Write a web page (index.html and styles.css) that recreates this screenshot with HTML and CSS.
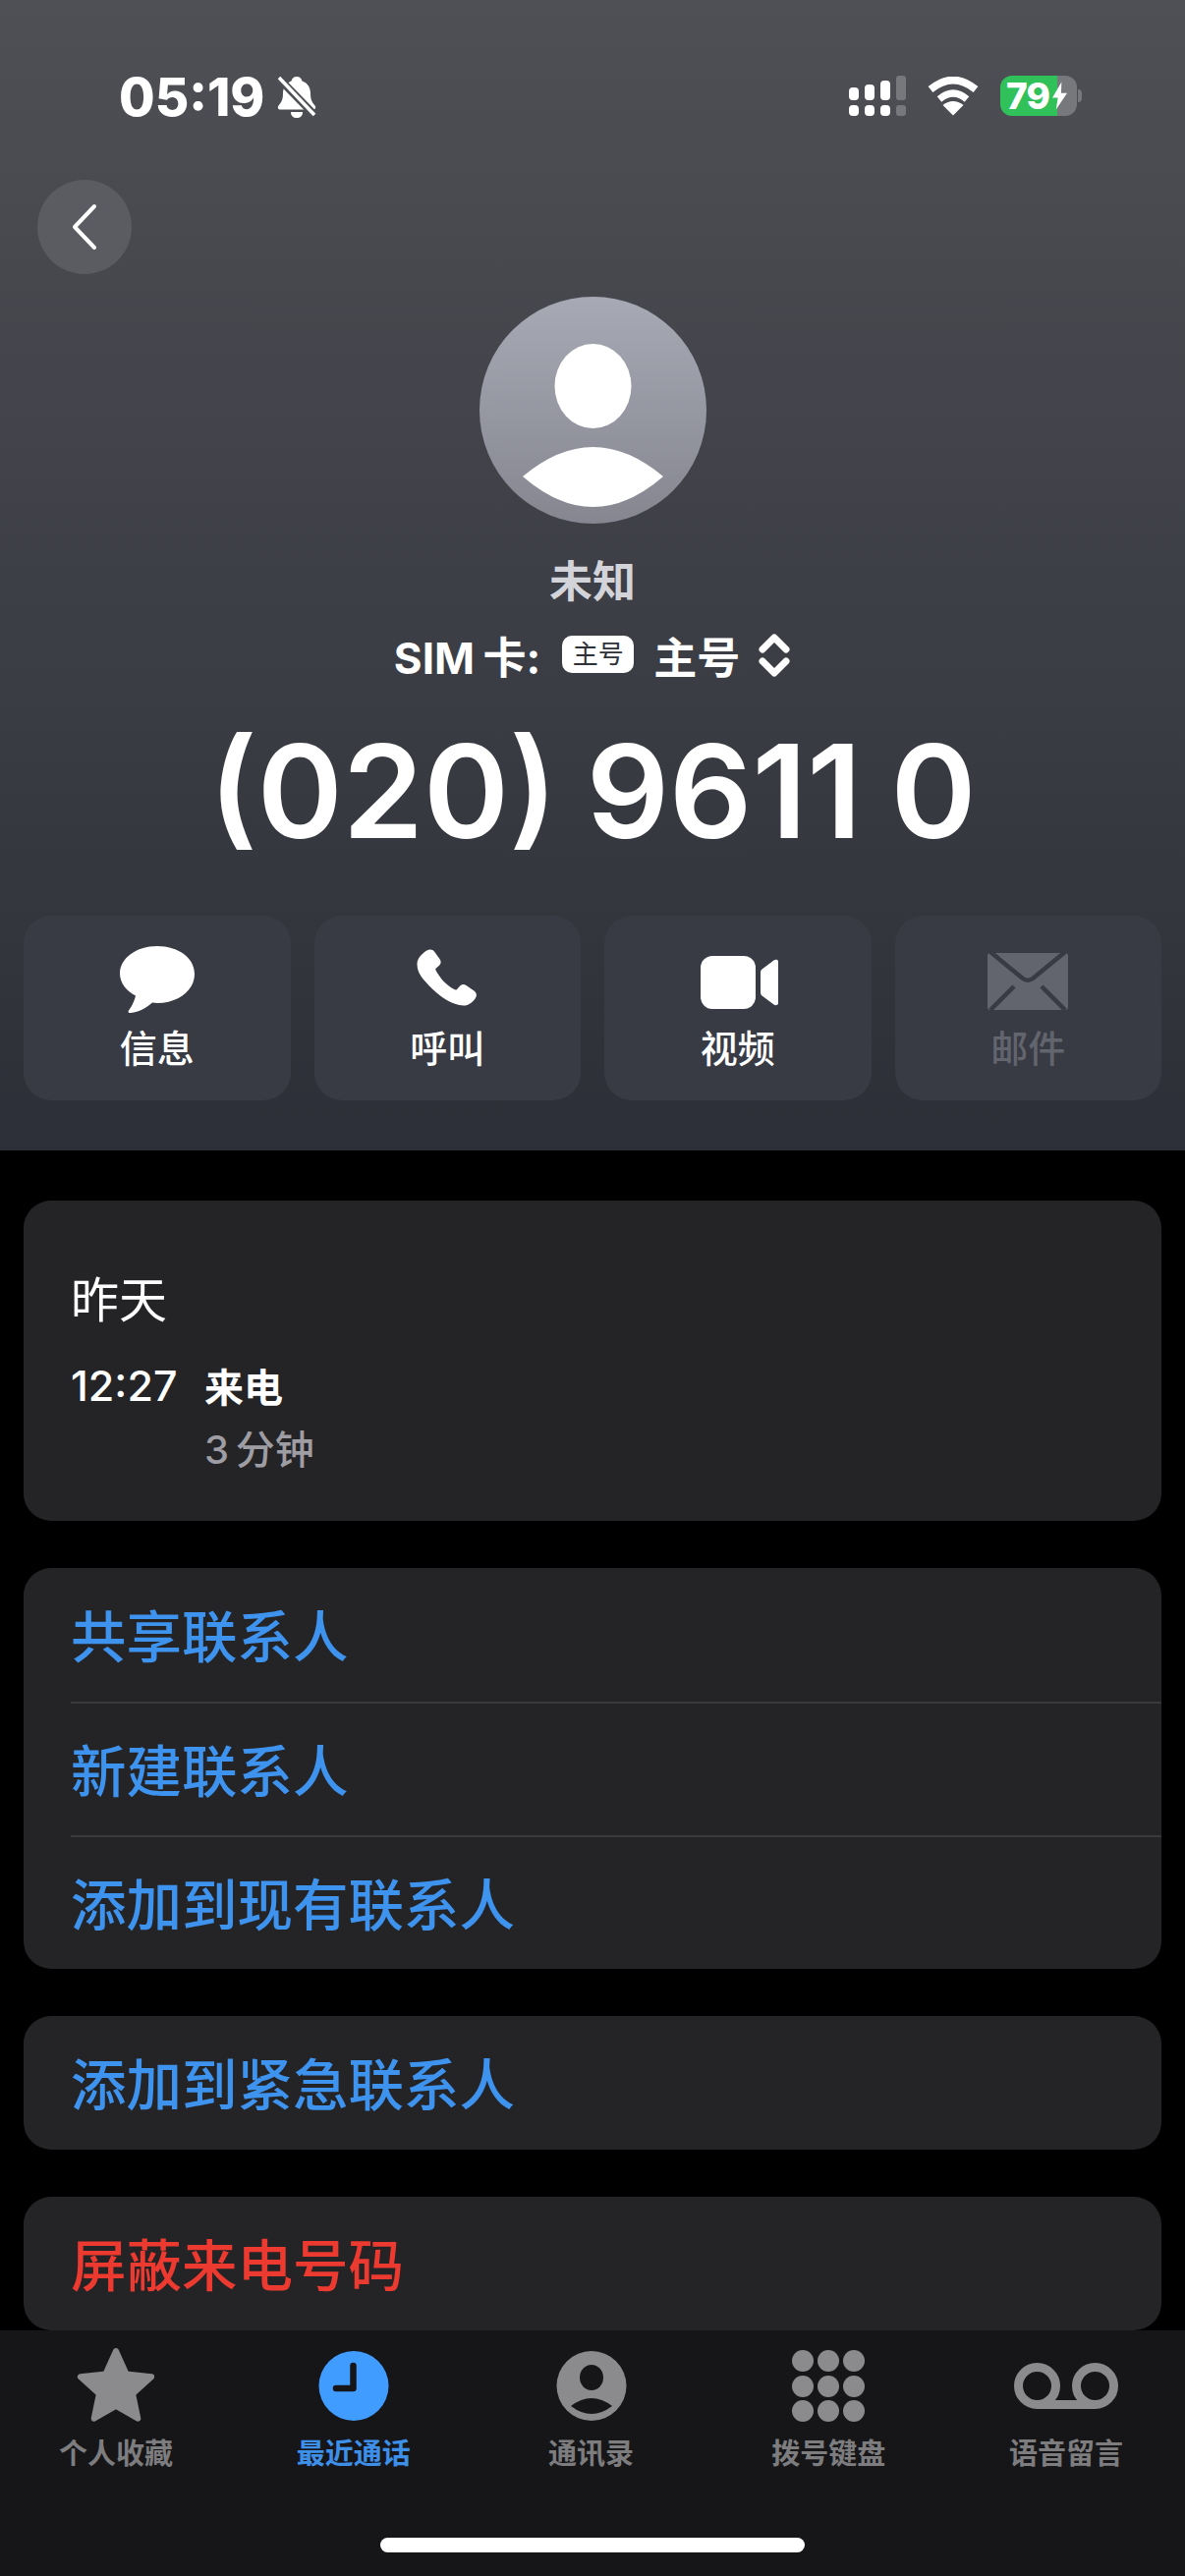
FILE: index.html
```html
<!DOCTYPE html>
<html lang="zh-CN">
<head>
    <meta charset="UTF-8">
    <meta name="viewport" content="width=device-width, initial-scale=1.0">
    <title>未知</title>
    <link rel="stylesheet" href="styles.css">
</head>
<body>
    <div class="phone">

        <!-- Contact header -->
        <header class="header">
            <div class="status-bar">
                <div class="status-left">
                    <span class="clock">05:19</span>
                    <svg class="bell" viewBox="0 0 42 44">
                        <path d="M21 1c3 0 5 2 5.500 4.500 6 2 8.500 7 8.500 13 0 6 2 9 4.500 12 1.500 2 .5 4-2 4H4.500c-2.500 0-3.500-2-2-4C5 27.500 7 24.500 7 18.500c0-6 2.500-11 8.500-13C16 3 18 1 21 1z" fill="#fff"/>
                        <path d="M15 37h12c0 4-2.500 6-6 6s-6-2-6-6z" fill="#fff"/>
                        <path d="M3 3l36 37" stroke="#4e4f54" stroke-width="8"/>
                        <path d="M3 2l36 38" stroke="#fff" stroke-width="3.500"/>
                    </svg>
                </div>
                <div class="status-right">
                    <svg class="signal" viewBox="0 0 58 41">
                        <rect x="0" y="12" width="10" height="13" rx="4" fill="#fff"/>
                        <rect x="16" y="9" width="10" height="16" rx="4" fill="#fff"/>
                        <rect x="32" y="5" width="10" height="20" rx="4" fill="#fff"/>
                        <rect x="48" y="0" width="10" height="25" rx="3" fill="#77787c"/>
                        <rect x="0" y="30" width="10" height="11" rx="4" fill="#fff"/>
                        <rect x="16" y="30" width="10" height="11" rx="4" fill="#fff"/>
                        <rect x="32" y="30" width="10" height="11" rx="4" fill="#fff"/>
                        <rect x="48" y="30" width="10" height="11" rx="3" fill="#77787c"/>
                    </svg>
                    <svg class="wifi" viewBox="0 0 52 40">
                        <path d="M3 13Q26 -6 49 13" fill="none" stroke="#fff" stroke-width="7.500"/>
                        <path d="M12 23Q26 11 40 23" fill="none" stroke="#fff" stroke-width="7"/>
                        <path d="M26 39.500L15.500 29Q26 21 36.500 29z" fill="#fff"/>
                    </svg>
                    <div class="battery">
                        <span class="battery-level">79</span>
                        <svg class="bolt" viewBox="0 0 16 30">
                            <path d="M10 0L0 17h6L4 30 16 12H9.500z" fill="#fff"/>
                        </svg>
                    </div>
                </div>
            </div>

            <div class="top-row">
                <button class="back-button">
                    <svg viewBox="0 0 30 48" class="back-icon">
                        <path d="M25 3L5 24l20 21" fill="none" stroke="#fff" stroke-width="4" stroke-linecap="round" stroke-linejoin="round"/>
                    </svg>
                </button>
                <svg class="avatar" viewBox="0 0 231 231">
                    <defs>
                        <linearGradient id="avatar-bg" x1="0" y1="0" x2="0" y2="1">
                            <stop offset="0" stop-color="#a7a9b4"/>
                            <stop offset="1" stop-color="#858690"/>
                        </linearGradient>
                    </defs>
                    <circle cx="115.500" cy="115.500" r="115.500" fill="url(#avatar-bg)"/>
                    <ellipse cx="115.500" cy="91" rx="39" ry="43" fill="#fff"/>
                    <path d="M44 183Q115.500 123 187 183Q115.500 245 44 183z" fill="#fff"/>
                </svg>
            </div>

            <div class="contact-name">未知</div>

            <div class="sim-row">
                <span class="sim-label">SIM 卡:</span>
                <span class="sim-badge">主号</span>
                <span class="sim-value">主号</span>
                <svg class="sim-arrows" viewBox="0 0 34 46">
                    <path d="M5 17L17 5l12 12M5 29l12 12 12-12" fill="none" stroke="#fff" stroke-width="7" stroke-linecap="round" stroke-linejoin="round"/>
                </svg>
            </div>

            <div class="phone-number">(020) 9611 0</div>

            <div class="actions">
                <div class="action">
                    <svg class="action-icon" viewBox="0 0 82 72">
                        <path d="M41 1C19.500 1 3 13.500 3 29c0 9.500 6.500 17.500 16 22.500-1 5-4 11-7 15-1 1.500 0 3 2 2.500 8.500-1 16-5 22-10.500 1.500.2 3.500.5 5 .5 21.500 0 38-13 38-29.500S62.500 1 41 1z" fill="#fff"/>
                    </svg>
                    <span class="action-label">信息</span>
                </div>
                <div class="action">
                    <svg class="action-icon" viewBox="0 0 82 72">
                        <path transform="translate(0 -1) scale(1.050)" d="M19 6.500c3-2 6-1.500 8 1l5 7c1.500 2.200 1.200 4.500-.6 6.200l-3 2.600c-.6.600-.7 1.300-.3 2 2 3.800 4.500 7.500 7.700 10.800 3.400 3.400 7 6 10.800 8 .8.400 1.400.3 2-.3l2.800-3c1.800-1.900 4-2.200 6.200-.7l7.600 5.200c2.600 1.800 3 4.600 1.200 7.200-2.600 3.600-6.300 7-11.500 7-8 0-20-6-30-16S10 28 10 19c0-5 5-10 9-12.500z" fill="#fff"/>
                    </svg>
                    <span class="action-label">呼叫</span>
                </div>
                <div class="action">
                    <svg class="action-icon" viewBox="0 0 82 72">
                        <rect x="3" y="11" width="56" height="54" rx="12" fill="#fff"/>
                        <path d="M64 28c0-1.500.5-2.500 1.500-3.500l12-9c2.500-1.500 5 -.5 5 3v39c0 3.500-2.500 4.500-5 3l-12-9c-1-1-1.500-2-1.500-3.500z" fill="#fff"/>
                    </svg>
                    <span class="action-label">视频</span>
                </div>
                <div class="action action-disabled">
                    <svg class="action-icon" viewBox="0 0 82 72">
                        <rect x="0" y="8" width="82" height="58" rx="3" fill="#63656e"/>
                        <path d="M3 7l33 27c3 2 7 2 10 0L79 7M3 66l24-24M79 66L55 42" fill="none" stroke="#383a44" stroke-width="4.500"/>
                    </svg>
                    <span class="action-label">邮件</span>
                </div>
            </div>
        </header>

        <!-- Details -->
        <main class="list">
            <section class="card card-call">
                <div class="call-day">昨天</div>
                <div class="call-row">
                    <div class="call-time">12:27</div>
                    <div>
                        <div class="call-type">来电</div>
                        <div class="call-length">3 分钟</div>
                    </div>
                </div>
            </section>

            <section class="card">
                <div class="row">共享联系人</div>
                <div class="row">新建联系人</div>
                <div class="row">添加到现有联系人</div>
            </section>

            <section class="card">
                <div class="row">添加到紧急联系人</div>
            </section>

            <section class="card">
                <div class="row row-danger">屏蔽来电号码</div>
            </section>
        </main>

        <!-- Tabs -->
        <footer class="tab-bar">
            <nav class="tabs">
                <div class="tab">
                    <svg class="tab-icon" viewBox="0 0 110 78">
                        <path d="M55 5L65.600 28.400 91.100 31.300 72.100 48.600 77.300 73.700 55 61 32.700 73.700 37.900 48.600 18.900 31.300 44.400 28.400z" fill="#8b8b8d" stroke="#8b8b8d" stroke-width="6" stroke-linejoin="round"/>
                    </svg>
                    <span>个人收藏</span>
                </div>
                <div class="tab tab-active">
                    <svg class="tab-icon" viewBox="0 0 110 78">
                        <circle cx="55" cy="40.500" r="35.500" fill="#409cff"/>
                        <path d="M54.500 20V43H37" fill="none" stroke="#161618" stroke-width="6.500" stroke-linecap="round" stroke-linejoin="round"/>
                    </svg>
                    <span>最近通话</span>
                </div>
                <div class="tab">
                    <svg class="tab-icon" viewBox="0 0 110 78">
                        <circle cx="55" cy="40.500" r="35.500" fill="#8b8b8d"/>
                        <ellipse cx="55" cy="32" rx="12" ry="13" fill="#161618"/>
                        <path d="M34 61Q55 45 76 61Q55 77 34 61z" fill="#161618"/>
                    </svg>
                    <span>通讯录</span>
                </div>
                <div class="tab">
                    <svg class="tab-icon" viewBox="0 0 110 78" fill="#8b8b8d">
                        <circle cx="29" cy="15" r="11"/>
                        <circle cx="55" cy="15" r="11"/>
                        <circle cx="81" cy="15" r="11"/>
                        <circle cx="29" cy="41" r="11"/>
                        <circle cx="55" cy="41" r="11"/>
                        <circle cx="81" cy="41" r="11"/>
                        <circle cx="29" cy="66" r="11"/>
                        <circle cx="55" cy="66" r="11"/>
                        <circle cx="81" cy="66" r="11"/>
                    </svg>
                    <span>拨号键盘</span>
                </div>
                <div class="tab">
                    <svg class="tab-icon" viewBox="0 0 110 78">
                        <circle cx="25.500" cy="40.500" r="19" fill="none" stroke="#8b8b8d" stroke-width="9"/>
                        <circle cx="84.500" cy="40.500" r="19" fill="none" stroke="#8b8b8d" stroke-width="9"/>
                        <path d="M25.500 59.500H84.500" stroke="#8b8b8d" stroke-width="9"/>
                    </svg>
                    <span>语音留言</span>
                </div>
            </nav>
            <div class="home-indicator"></div>
        </footer>

    </div>
</body>
</html>
```

FILE: styles.css
```css
* {
    box-sizing: border-box;
}

body {
    margin: 0;
    padding: 0;
    background: #000;
    font-family: Inter, "Noto Sans CJK SC", sans-serif;
    color: #fff;
}

.phone {
    width: 1206px;
    height: 2622px;
    display: flex;
    flex-direction: column;
    overflow: hidden;
}

/* Header */

.header {
    height: 1171px;
    padding-bottom: 51px;
    background: linear-gradient(180deg, #4f5055, #2d2f38);
}

.status-bar {
    height: 183px;
    padding: 77px 110px 0 121px;
    display: flex;
    justify-content: space-between;
    align-items: flex-start;
}

.status-left {
    display: flex;
    align-items: center;
    gap: 12px;
}

.clock {
    font-size: 53px;
    line-height: 42px;
    font-weight: 800;
}

.bell {
    width: 42px;
    height: 44px;
}

.status-right {
    display: flex;
    align-items: center;
    gap: 22px;
}

.signal {
    width: 58px;
    height: 41px;
}

.wifi {
    width: 52px;
    height: 40px;
}

.battery {
    width: 78px;
    height: 41px;
    padding-left: 6px;
    border-radius: 12px;
    background: linear-gradient(90deg, #31c15a 74%, #77787c 74%);
    display: flex;
    align-items: center;
    gap: 3px;
    position: relative;
}

/* battery nub */
.battery::after {
    content: "";
    position: absolute;
    right: -5px;
    top: 14px;
    width: 4px;
    height: 13px;
    border-radius: 0 4px 4px 0;
    background: #77787c;
}

.battery-level {
    font-size: 37px;
    line-height: 41px;
    font-weight: 800;
    letter-spacing: -1px;
}

.bolt {
    width: 15px;
    height: 29px;
}

.top-row {
    padding: 0 38px;
    display: grid;
    grid-template-columns: 96px 1fr 96px;
    justify-items: center;
    align-items: start;
}

.back-button {
    width: 96px;
    height: 96px;
    padding: 0;
    border: none;
    border-radius: 50%;
    background: #5a5c62;
    display: flex;
    justify-content: center;
    align-items: center;
}

.back-icon {
    width: 30px;
    height: 48px;
}

.avatar {
    width: 231px;
    height: 231px;
    margin-top: 119px;
}

.contact-name {
    margin-top: 34px;
    font-size: 44px;
    line-height: 50px;
    font-weight: 700;
    color: #d3d4da;
    text-align: center;
}

.sim-row {
    margin-top: 25px;
    height: 50px;
    font-size: 44px;
    font-weight: 700;
    display: flex;
    justify-content: center;
    align-items: center;
}

.sim-label {
    word-spacing: -2px;
}

.sim-badge {
    width: 73px;
    height: 38px;
    margin: -2px 20px 0 22px;
    border-radius: 10px;
    background: #fff;
    color: #2f3139;
    font-size: 26px;
    font-weight: 400;
    line-height: 38px;
    text-align: center;
}

.sim-arrows {
    width: 34px;
    height: 46px;
    margin-left: 18px;
}

.phone-number {
    margin-top: 47px;
    font-size: 132px;
    line-height: 132px;
    font-weight: 600;
    word-spacing: -4px;
    text-align: center;
}

.actions {
    margin-top: 61px;
    padding: 0 24px;
    display: flex;
    gap: 24px;
}

.action {
    flex: 1;
    height: 188px;
    padding-top: 30px;
    border-radius: 28px;
    background: #383a44;
    display: flex;
    flex-direction: column;
    align-items: center;
}

.action-icon {
    width: 82px;
    height: 72px;
}

.action-label {
    margin-top: 10px;
    font-size: 38px;
    line-height: 46px;
    font-weight: 500;
}

.action-disabled .action-label {
    color: #63656e;
}

/* List */

.list {
    flex: 1;
    padding: 51px 24px 0;
    display: flex;
    flex-direction: column;
    gap: 48px;
    overflow: hidden;
}

.card {
    flex-shrink: 0;
    border-radius: 28px;
    background: #242326;
}

.card-call {
    height: 326px;
    padding: 72px 48px 0;
}

.call-day {
    font-size: 49px;
    line-height: 60px;
}

.call-row {
    margin-top: 31px;
    display: flex;
}

.call-time {
    width: 136px;
    font-size: 43px;
    line-height: 50px;
    font-weight: 500;
}

.call-type {
    font-size: 40px;
    line-height: 56px;
    font-weight: 700;
}

.call-length {
    margin-top: 7px;
    font-size: 40px;
    line-height: 56px;
    font-weight: 500;
    color: #9d9da3;
    word-spacing: -4px;
}

.row {
    height: 136px;
    margin-left: 48px;
    padding-bottom: 5px;
    font-size: 56.500px;
    font-weight: 500;
    color: #3e93ee;
    display: flex;
    align-items: center;
}

.row + .row {
    border-top: 2px solid #3a3a3c;
}

.row-danger {
    color: #ec3a30;
}

/* Tab bar */

.tab-bar {
    height: 250px;
    background: #161618;
    display: flex;
    flex-direction: column;
}

.tabs {
    padding: 16px 3px 0 0;
    display: grid;
    grid-template-columns: repeat(5, 241.75px);
    justify-content: center;
}

.tab {
    font-size: 29px;
    line-height: 36px;
    font-weight: 700;
    color: #7d7d7f;
    display: flex;
    flex-direction: column;
    align-items: center;
}

.tab-active {
    color: #3d8fe8;
}

.tab-icon {
    width: 110px;
    height: 78px;
    margin-bottom: 14px;
}

.home-indicator {
    width: 432px;
    height: 15px;
    margin: auto auto 24px;
    border-radius: 8px;
    background: #fff;
}
```
